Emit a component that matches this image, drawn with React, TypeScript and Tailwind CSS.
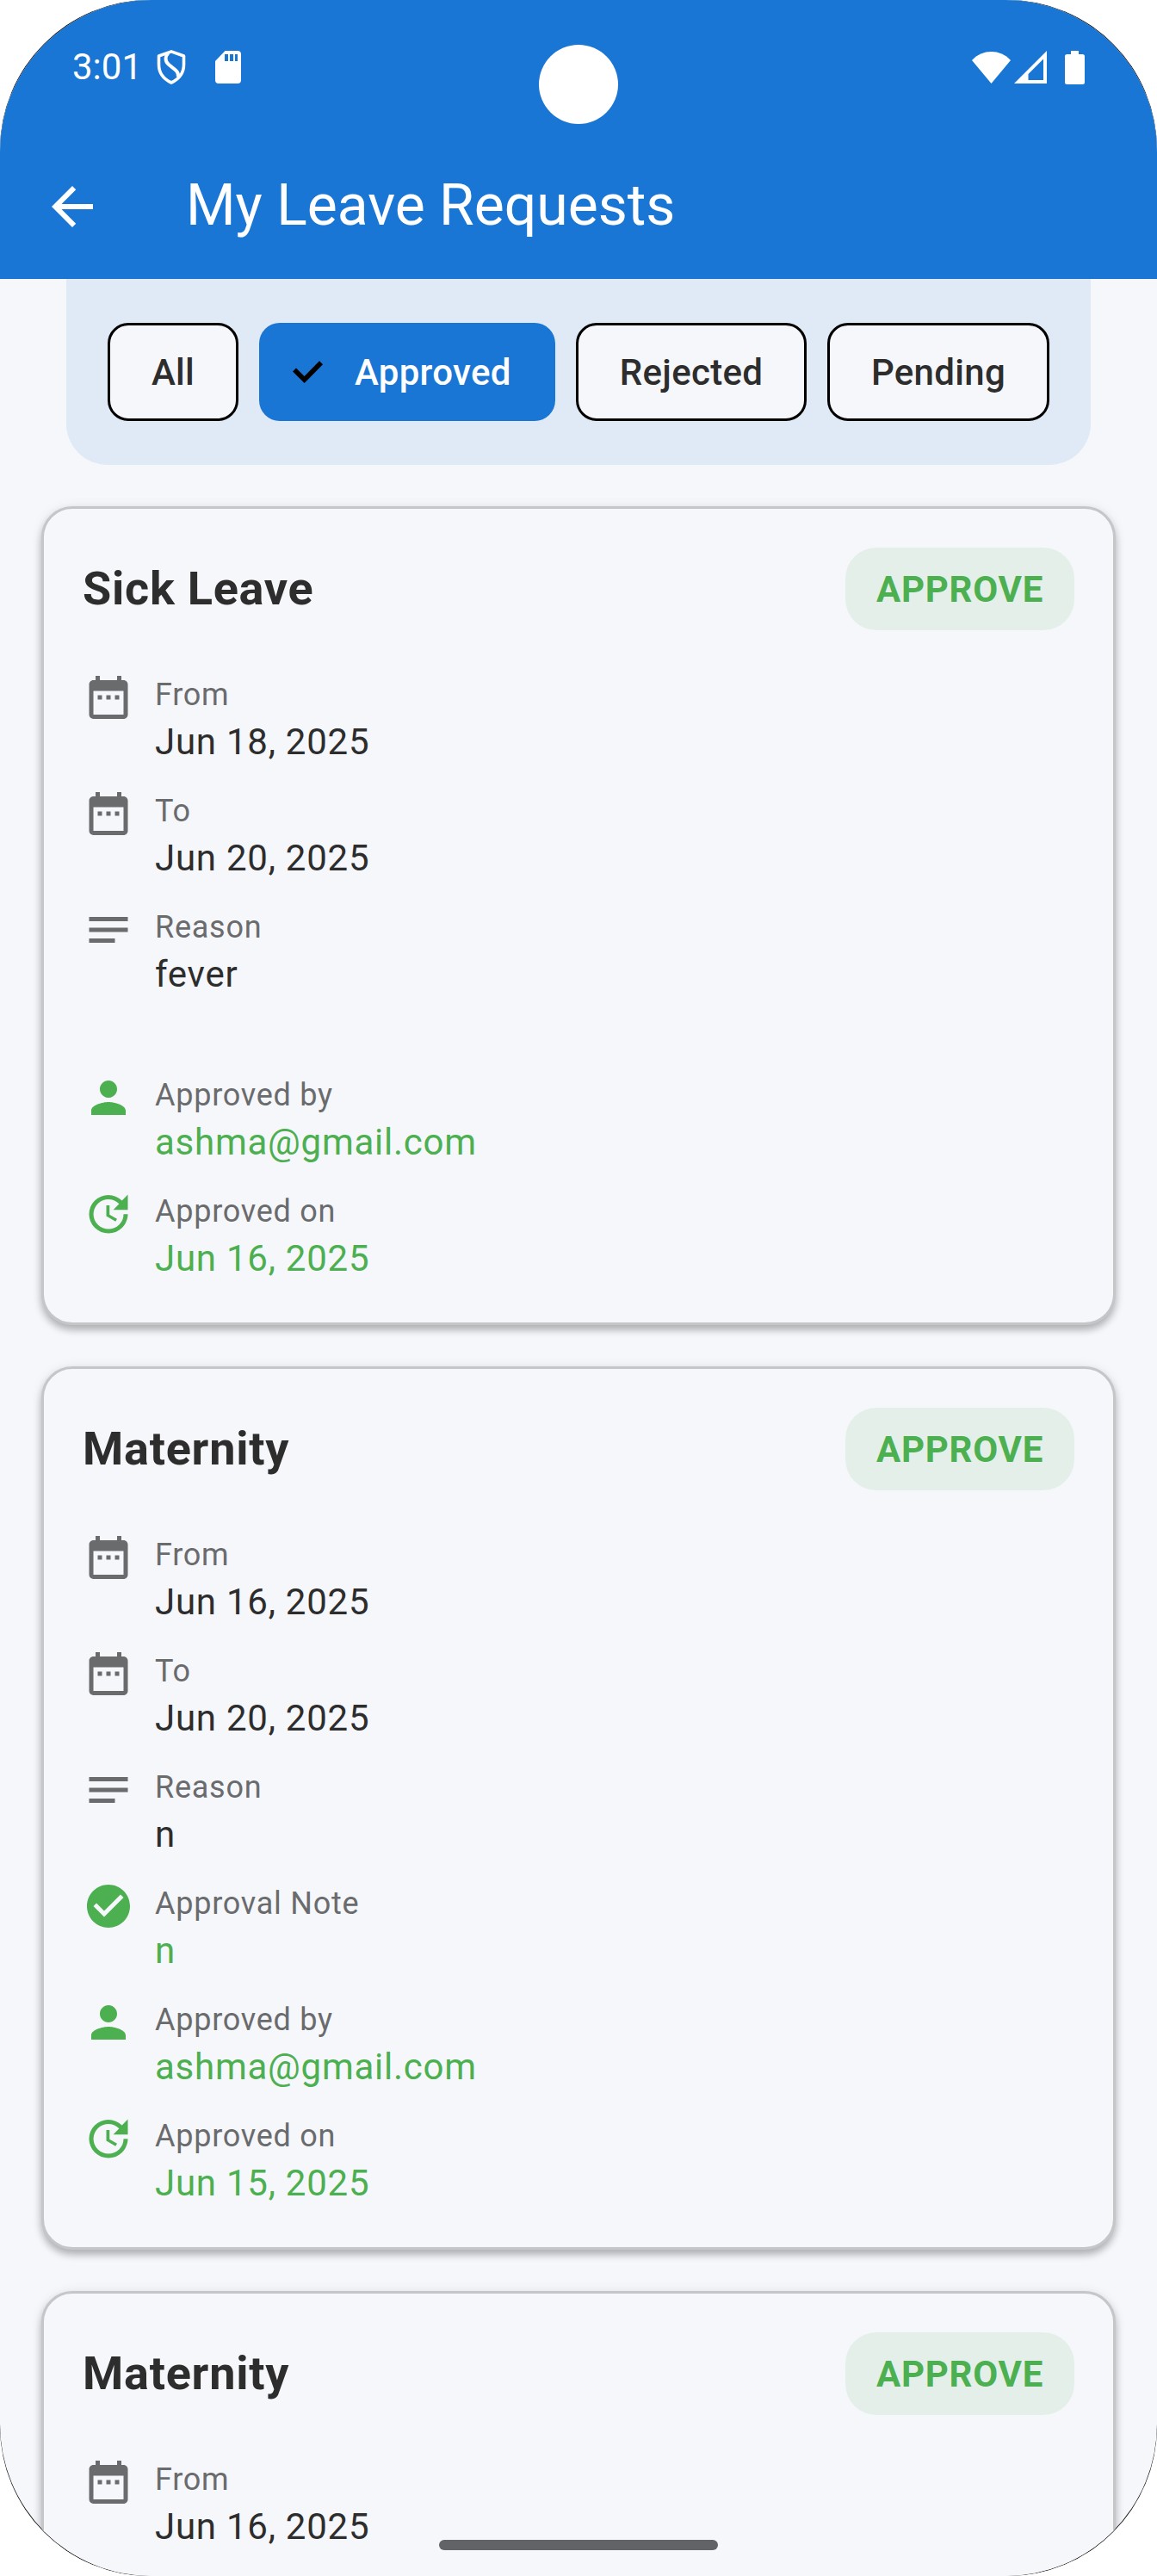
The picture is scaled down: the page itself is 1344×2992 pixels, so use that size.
import React from "react";
import {
  MdArrowBack,
  MdCheckCircle,
  MdDateRange,
  MdNotes,
  MdPerson,
  MdUpdate,
} from "react-icons/md";
import type { IconType } from "react-icons";

type Row = { icon: IconType; label: string; value: string; green?: boolean; gapBefore?: boolean };
type Leave = { title: string; rows: Row[] };

const leaves: Leave[] = [
  {
    title: "Sick Leave",
    rows: [
      { icon: MdDateRange, label: "From", value: "Jun 18, 2025" },
      { icon: MdDateRange, label: "To", value: "Jun 20, 2025" },
      { icon: MdNotes, label: "Reason", value: "fever" },
      { icon: MdPerson, label: "Approved by", value: "ashma@gmail.com", green: true, gapBefore: true },
      { icon: MdUpdate, label: "Approved on", value: "Jun 16, 2025", green: true },
    ],
  },
  {
    title: "Maternity",
    rows: [
      { icon: MdDateRange, label: "From", value: "Jun 16, 2025" },
      { icon: MdDateRange, label: "To", value: "Jun 20, 2025" },
      { icon: MdNotes, label: "Reason", value: "n" },
      { icon: MdCheckCircle, label: "Approval Note", value: "n", green: true },
      { icon: MdPerson, label: "Approved by", value: "ashma@gmail.com", green: true },
      { icon: MdUpdate, label: "Approved on", value: "Jun 15, 2025", green: true },
    ],
  },
  {
    title: "Maternity",
    rows: [{ icon: MdDateRange, label: "From", value: "Jun 16, 2025" }],
  },
];

function StatusBar() {
  return (
    <div className="relative flex h-[156px] items-start justify-between px-[84px] pt-[53px]">
      <div className="flex h-[50px] items-center">
        <span className="w-[98px] text-[42px] leading-[50px]">3:01</span>
        <svg className="h-[40px] w-[34px]" viewBox="0 0 34 40" fill="none" stroke="currentColor" strokeWidth="3.6" strokeLinejoin="round">
          <path d="M17 1.900 31.500 7v10c0 9-5 16.500-14.500 21C7.500 33.500 2.500 26 2.500 17V7z" />
          <path d="M13.500 3.500C9.500 8 9.500 13 14 17c5 4.500 12 7 11 14.500" strokeWidth="4" />
        </svg>
        <svg className="ml-[34px] h-[38px] w-[30px]" viewBox="0 0 30 38" fill="currentColor">
          <path
            fillRule="evenodd"
            d="M11.500 0H26a4 4 0 0 1 4 4v30a4 4 0 0 1-4 4H4a4 4 0 0 1-4-4V12zM11 4v8h4V4zm6 0v8h4V4zm6 0v8h3V4z"
          />
        </svg>
      </div>
      <div className="absolute top-[52px] left-1/2 size-[92px] -translate-x-1/2 rounded-full bg-white" />
      <div className="flex h-[50px] items-center">
        <svg className="h-[37px] w-[45px]" viewBox="0 0 45 37" fill="currentColor">
          <path d="M0 10C12-3.300 33-3.300 45 10L22.500 37z" />
        </svg>
        <svg className="ml-[4px] h-[38px] w-[38px]" viewBox="0 0 38 38" fill="currentColor">
          <path fillRule="evenodd" d="M38 0v38H0zM34 9.500 16.500 27v7H34z" />
        </svg>
        <svg className="ml-[21px] h-[39px] w-[23px]" viewBox="0 0 23 39" fill="currentColor">
          <path d="M7 0h9v4h4.500A2.500 2.500 0 0 1 23 6.500v30a2.500 2.500 0 0 1-2.500 2.500h-18A2.500 2.500 0 0 1 0 36.500v-30A2.500 2.500 0 0 1 2.500 4H7z" />
        </svg>
      </div>
    </div>
  );
}

function Chip({ label, width }: { label: string; width: string }) {
  return (
    <button
      className={`flex h-[114px] items-center justify-center rounded-[24px] border-3 border-black bg-[#f6f7fb] text-[42px] font-medium tracking-[0.3px] text-[#2d2d2d] ${width}`}
    >
      {label}
    </button>
  );
}

function Filters() {
  return (
    <div className="mx-[77px] flex h-[216px] gap-[24px] rounded-b-[48px] bg-[#e0eaf6] pt-[51px] pl-[48px]">
      <Chip label="All" width="w-[152px]" />
      <button className="flex h-[114px] w-[344px] items-center rounded-[24px] bg-[#1976d4] pl-[39px] text-[42px] font-medium tracking-[0.3px] text-white">
        <svg className="h-[26px] w-[35px] text-black" viewBox="0 0 35 26" fill="none" stroke="currentColor" strokeWidth="5.6">
          <path d="M2 10.500 13.600 22 33 2.200" />
        </svg>
        <span className="ml-[37px]">Approved</span>
      </button>
      <Chip label="Rejected" width="w-[268px]" />
      <Chip label="Pending" width="w-[258px]" />
    </div>
  );
}

function DetailRow({ icon: Icon, label, value, green, gapBefore }: Row) {
  return (
    <div className={`flex h-[111px] gap-[24px] ${gapBefore ? "mt-[60px]" : ""}`}>
      <Icon className={`size-[60px] shrink-0 ${green ? "text-[#4caf50]" : "text-[#6a6b6d]"}`} />
      <div className="pt-[3px]">
        <div className="text-[36px] leading-[49px] tracking-[0.75px] text-[#6a6b6d]">{label}</div>
        <div className={`text-[42px] leading-[60px] tracking-[0.75px] ${green ? "text-[#4caf50]" : "text-[#2d2d2d]"}`}>
          {value}
        </div>
      </div>
    </div>
  );
}

function LeaveCard({ title, rows }: Leave) {
  return (
    <section className="rounded-[36px] border-3 border-[#c5c6c8] bg-[#f6f7fb] p-[45px] shadow-[0_6px_8px_rgba(0,0,0,0.25),0_1px_14px_rgba(0,0,0,0.08)]">
      <div className="flex h-[96px] items-center justify-between">
        <h2 className="text-[54px] leading-[64px] font-bold tracking-[0.75px] text-[#2d2d2d]">{title}</h2>
        <span className="flex h-[96px] w-[266px] items-center justify-center rounded-[36px] bg-[#e5efe9] text-[42px] font-bold tracking-[0.75px] text-[#4caf50]">
          APPROVE
        </span>
      </div>
      <div className="mt-[48px] flex flex-col gap-[24px]">
        {rows.map((row) => (
          <DetailRow key={row.label} {...row} />
        ))}
      </div>
    </section>
  );
}

export default function App() {
  return (
    <div className="w-[1344px] rounded-[174px] bg-black font-[Roboto,sans-serif]">
      <div className="relative h-[2992px] overflow-hidden rounded-[176px] bg-[#f6f7fb]">
        <header className="h-[324px] bg-[#1976d4] text-white">
          <StatusBar />
          <div className="flex h-[168px] items-center pl-[48px]">
            <MdArrowBack className="size-[72px]" />
            <h1 className="ml-[96px] pb-[3px] text-[66px] leading-[82px]">My Leave Requests</h1>
          </div>
        </header>
        <Filters />
        <main className="mt-[48px] flex flex-col gap-[48px] px-[48px]">
          {leaves.map((leave, i) => (
            <LeaveCard key={i} {...leave} />
          ))}
        </main>
        <div className="absolute bottom-[30px] left-1/2 h-[12px] w-[324px] -translate-x-1/2 rounded-full bg-[#626366]" />
      </div>
    </div>
  );
}
